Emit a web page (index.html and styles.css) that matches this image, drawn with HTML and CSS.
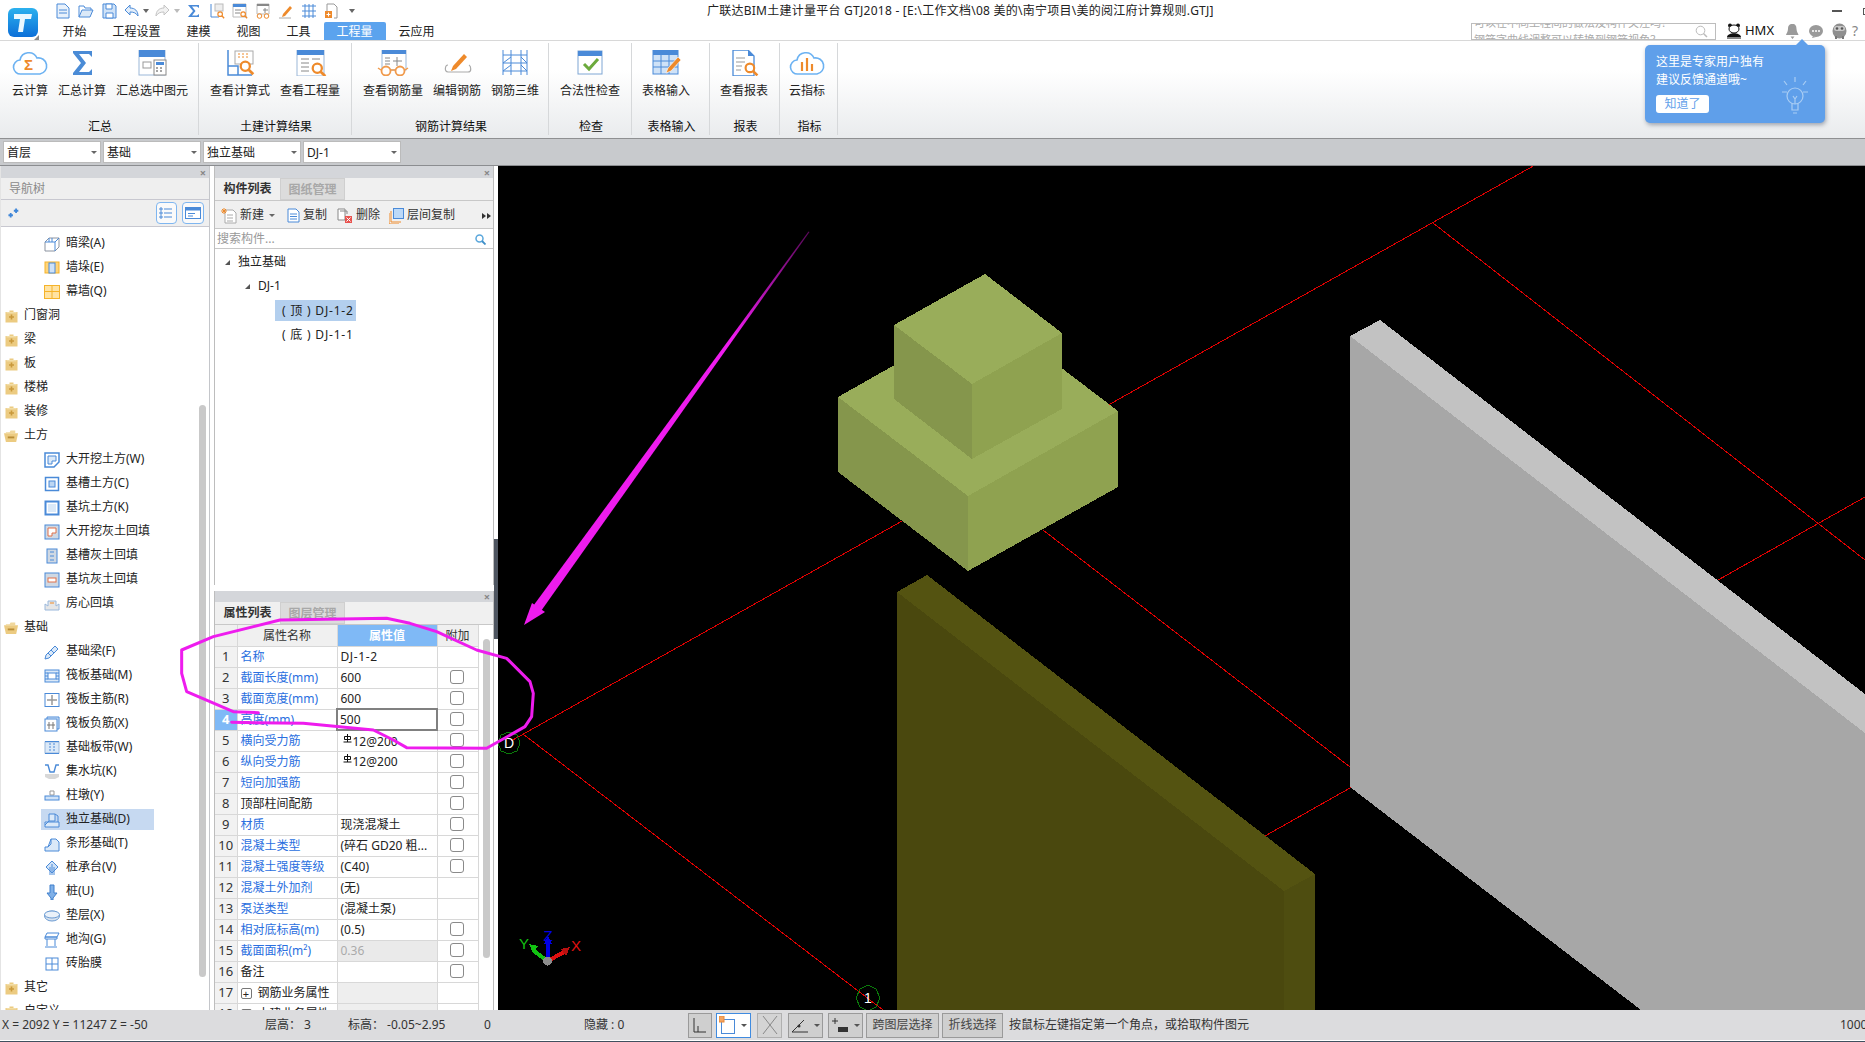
FILE: index.html
```html
<!DOCTYPE html>
<html lang="zh-CN">
<head>
<meta charset="utf-8">
<title>广联达BIM土建计量平台 GTJ2018</title>
<link rel="stylesheet" href="styles.css">
</head>
<body>
<svg class="defs" width="0" height="0" aria-hidden="true">
  <symbol id="fold" viewBox="0 0 14 14"><path d="M1 3h4V1.500h4V3h4v10.500H1z" fill="#eccb81"/><path d="M2 3.800h10" stroke="#f6e5b8"/><path d="M7 5.500v5M4.500 8h5" stroke="#c9993b" stroke-width="1.600"/></symbol>
  <symbol id="open" viewBox="0 0 16 14"><path d="M2 3h4l1-2h5v3H2z" fill="#f0d79c"/><path d="M0 4h15l-2 9.500H2z" fill="#eccb81"/><path d="M4 8.500h7" stroke="#b98d37" stroke-width="2"/></symbol>
  <symbol id="mag" viewBox="0 0 14 14"><circle cx="5.500" cy="5.500" r="4" fill="#fff" stroke="#ee8a2b" stroke-width="2"/><path d="M8.500 8.500l4 4" stroke="#ee8a2b" stroke-width="2.400"/></symbol>
</svg>

<header class="top">
  <div class="logo-box">
    <svg class="logo" width="30" height="29" viewBox="0 0 30 29"><defs><linearGradient id="lg" x1="0" y1="0" x2="0" y2="1"><stop offset="0" stop-color="#2cb1ee"/><stop offset="1" stop-color="#0c6fd8"/></linearGradient></defs><rect width="30" height="29" rx="6" fill="url(#lg)"/><path d="M6 6h18l-1 5h-6l-2 13h-5l2-13H6z" fill="#eaf8ff"/></svg>
    <svg class="logo-arrow" width="5" height="5" viewBox="0 0 5 5"><path d="M5 0v5H0z" fill="#8a8a8a"/></svg>
  </div>
  <div class="top-main">
    <div class="title-row">
      <div class="qat">
        <svg class="qi" viewBox="0 0 16 16"><path d="M2 1h8l4 4v10H2z" fill="#e8f1fb" stroke="#4a8ad8"/><path d="M4 7h8M4 10h8" stroke="#4a8ad8"/></svg>
        <svg class="qi" viewBox="0 0 16 16"><path d="M1 14V3h5l1 2h6v2" fill="none" stroke="#4a8ad8"/><path d="M1 14l3-7h11l-3 7z" fill="#dbe9f8" stroke="#4a8ad8"/></svg>
        <svg class="qi" viewBox="0 0 16 16"><path d="M2 1h11l2 2v12H2z" fill="#cfe2f7" stroke="#4a8ad8"/><path d="M5 1h6v5H5zM5 10h7v5H5z" fill="#fff" stroke="#4a8ad8"/></svg>
        <svg class="qi" viewBox="0 0 16 16"><path d="M6 2L1 7l5 5V9c4 0 6 1 8 4 0-5-3-8-8-8z" fill="#e3eefa" stroke="#4a8ad8"/></svg>
        <span class="qd"></span>
        <svg class="qi qm" viewBox="0 0 16 16"><path d="M10 2l5 5-5 5V9c-4 0-6 1-8 4 0-5 3-8 8-8z" fill="#f2f2f2" stroke="#c4c4c4"/></svg>
        <span class="qd qg"></span>
        <svg class="qi qs" viewBox="0 0 16 16"><path d="M2 2h11v3l-2-1.500H6L9.500 8 6 12.500h5l2-1.500v3H2l5-6z" fill="#4a8ad8"/></svg>
        <svg class="qi" viewBox="0 0 16 16"><path d="M2 1v13h8" fill="none" stroke="#4a8ad8"/><rect x="6" y="1" width="8" height="7" fill="#eee" stroke="#bbb"/><use href="#mag" x="8" y="8" width="8" height="8"/></svg>
        <svg class="qi" viewBox="0 0 16 16"><path d="M1 1h13v13H1z" fill="#fff" stroke="#bbb"/><path d="M1 1h13v3H1z" fill="#4a8ad8"/><path d="M3 7h6M3 10h5" stroke="#888"/><use href="#mag" x="8" y="8" width="8" height="8"/></svg>
        <svg class="qi" viewBox="0 0 16 16"><path d="M2 1h12v10H2z" fill="#fff" stroke="#bbb"/><path d="M2 1h12v2H2z" fill="#888"/><path d="M10 5v5M8 7h5" stroke="#888"/><circle cx="4.500" cy="13" r="2.300" fill="none" stroke="#ee8a2b"/><circle cx="11.500" cy="13" r="2.300" fill="none" stroke="#ee8a2b"/></svg>
        <svg class="qi" viewBox="0 0 16 16"><path d="M5 11L12 3l2 2-7 8-3 1z" fill="#ee8a2b"/><path d="M1 15h12" stroke="#aaa"/></svg>
        <svg class="qi" viewBox="0 0 16 16"><path d="M1 3h14M1 8h14M1 13h14M4 1v14M8 1v14M12 1v14" stroke="#4a8ad8" fill="none"/></svg>
        <svg class="qi" viewBox="0 0 16 16"><path d="M3 8V1h7l3 3v11h-3" fill="#fff" stroke="#999"/><rect x="1" y="8" width="7" height="7" fill="#ee8a2b"/><path d="M4.500 9.500v4M2.500 11.500h4" stroke="#fff"/></svg>
        <span class="qd qm2"></span>
      </div>
      <div class="title">广联达BIM土建计量平台 GTJ2018 - [E:\工作文档\08 美的\南宁项目\美的阅江府计算规则.GTJ]</div>
      <div class="win"><span class="win-min"></span><span class="win-max"></span></div>
    </div>
    <div class="tab-row">
      <nav class="tabs">
        <span class="tab">开始</span><span class="tab">工程设置</span><span class="tab">建模</span><span class="tab">视图</span><span class="tab">工具</span><span class="tab active">工程量</span><span class="tab">云应用</span>
      </nav>
      <div class="tools">
        <div class="search"><div class="search-text">可以在不同工程间的做法及构件关注吗？<br>钢筋字曲线调整可以转换到钢筋视角？</div>
          <svg width="13" height="13" viewBox="0 0 13 13"><circle cx="5.500" cy="5.500" r="4.300" fill="none" stroke="#bbb"/><path d="M8.500 8.500l3.500 3.500" stroke="#bbb" stroke-width="1.500"/></svg>
        </div>
        <svg class="panda" width="16" height="16" viewBox="0 0 16 16"><circle cx="4" cy="2.500" r="2" fill="#111"/><circle cx="12" cy="2.500" r="2" fill="#111"/><ellipse cx="8" cy="6" rx="5" ry="4" fill="#fff" stroke="#111"/><path d="M1 14c1-5 13-5 14 0z" fill="#111"/><path d="M1 15h14" stroke="#111"/></svg>
        <span class="user">HMX</span>
        <svg class="ti1" width="13" height="15" viewBox="0 0 13 15"><path d="M6.500 0c3 0 4 2 4 5 0 3 2 5 2 6H0c0-1 2-3 2-6 0-3 1-5 4.500-5zM4.500 12.500h4L6.500 15z" fill="#9a9a9a"/></svg>
        <svg class="ti2" width="14" height="13" viewBox="0 0 14 13"><ellipse cx="7" cy="6" rx="7" ry="6" fill="#9a9a9a"/><path d="M4 11l-1 2 4-1z" fill="#9a9a9a"/><circle cx="4" cy="6" r="1" fill="#fff"/><circle cx="7" cy="6" r="1" fill="#fff"/><circle cx="10" cy="6" r="1" fill="#fff"/></svg>
        <svg class="ti3" width="15" height="16" viewBox="0 0 15 16"><ellipse cx="7.500" cy="8" rx="7" ry="7.500" fill="#8f8f8f"/><rect x="2" y="3" width="11" height="5" rx="2.500" fill="#c8c8c8"/><circle cx="5" cy="5.500" r="1.300" fill="#555"/><circle cx="10" cy="5.500" r="1.300" fill="#555"/><path d="M4 13v3M11 13v3" stroke="#777" stroke-width="2"/></svg>
        <span class="help">?</span>
      </div>
    </div>
  </div>
</header>

<section class="ribbon">
  <div class="group">
    <div class="items g1">
      <div class="rb"><svg class="ric" viewBox="0 0 36 26"><path d="M9 24a7 7 0 0 1-1-14 9 9 0 0 1 17-2 8 8 0 0 1 3 16z" fill="#fff" stroke="#6cb2f2" stroke-width="1.600"/><text class="sig" x="12" y="20">Σ</text></svg><span>云计算</span></div>
      <div class="rb"><svg class="ric" viewBox="0 0 36 26"><path d="M9 1h19v6l-3-3H15l7 9-7 9h10l3-3v6H9v-2l8-10-8-10z" fill="#4a8bd6"/></svg><span>汇总计算</span></div>
      <div class="rb"><svg class="ric" viewBox="0 0 36 26"><rect x="5" y="0" width="26" height="25" fill="#fff" stroke="#9bb7d8"/><rect x="5" y="0" width="26" height="7" fill="#4a8ad8"/><rect x="9" y="12" width="8" height="6" fill="none" stroke="#999"/><rect x="20" y="10" width="12" height="15" fill="#fff" stroke="#888"/><rect x="22" y="12" width="8" height="3" fill="#4a8ad8"/><path d="M22 18h2m2 0h2m-6 3h2m2 0h2" stroke="#888" stroke-width="1.500"/></svg><span>汇总选中图元</span></div>
    </div>
    <div class="glabel">汇总</div>
  </div>
  <div class="group">
    <div class="items">
      <div class="rb w60"><svg class="ric" viewBox="0 0 36 26"><path d="M6 0v25h24" fill="none" stroke="#4a8ad8" stroke-width="1.500"/><path d="M6 16h10v9" fill="none" stroke="#4a8ad8" stroke-width="1.500"/><rect x="13" y="1" width="18" height="13" fill="#fff" stroke="#aaa"/><path d="M16 4h2m2 0h2m2 0h2m-10 3h2m2 0h2m2 0h2" stroke="#ee8a2b"/><use href="#mag" x="17" y="10" width="16" height="16"/></svg><span>查看计算式</span></div>
      <div class="rb w60"><svg class="ric" viewBox="0 0 36 26"><rect x="5" y="0" width="27" height="26" fill="#fff" stroke="#9bb7d8"/><rect x="5" y="0" width="27" height="5" fill="#4a8ad8"/><path d="M9 9h8m3 0h8M9 13h8M9 17h8M9 21h8" stroke="#888"/><use href="#mag" x="19" y="12" width="16" height="16"/></svg><span>查看工程量</span></div>
    </div>
    <div class="glabel">土建计算结果</div>
  </div>
  <div class="group">
    <div class="items">
      <div class="rb w60"><svg class="ric" viewBox="0 0 36 26"><rect x="7" y="0" width="24" height="20" fill="#fff" stroke="#9bb7d8"/><rect x="7" y="0" width="24" height="4" fill="#4a8ad8"/><path d="M10 8h5M10 11h5M10 14h5M22 7v9M18 11h9" stroke="#888"/><circle cx="11" cy="21" r="4.500" fill="#fff" stroke="#f09a4c" stroke-width="1.800"/><circle cx="25" cy="21" r="4.500" fill="#fff" stroke="#f09a4c" stroke-width="1.800"/><path d="M15 20h6M6 20l-3-2M30 20l3-2" stroke="#f09a4c" stroke-width="1.500"/></svg><span>查看钢筋量</span></div>
      <div class="rb"><svg class="ric" viewBox="0 0 36 26"><path d="M14 16L25 4l3 3-11 12-5 2z" fill="#ee8a2b"/><path d="M9 15c-3 0-4 7 0 7h20c4 0 3-6 1-7" fill="none" stroke="#aaa" stroke-width="1.200"/></svg><span>编辑钢筋</span></div>
      <div class="rb"><svg class="ric" viewBox="0 0 36 26"><path d="M6 0v25M30 0v25M14 0v25M24 0v25M6 5h24M6 13h24M6 21h24M6 13L14 7M24 7l6 6M6 21l8-6M24 15l6 6" stroke="#4a8ad8" fill="none"/></svg><span>钢筋三维</span></div>
    </div>
    <div class="glabel">钢筋计算结果</div>
  </div>
  <div class="group">
    <div class="items">
      <div class="rb w60"><svg class="ric" viewBox="0 0 36 26"><rect x="6" y="1" width="24" height="23" fill="#fff" stroke="#7ea6d4"/><rect x="6" y="1" width="24" height="5" fill="#4a8ad8"/><path d="M12 14l5 5 9-10" fill="none" stroke="#6caa3c" stroke-width="3"/></svg><span>合法性检查</span></div>
    </div>
    <div class="glabel">检查</div>
  </div>
  <div class="group">
    <div class="items g5">
      <div class="rb"><svg class="ric" viewBox="0 0 36 26"><rect x="5" y="0" width="25" height="24" fill="#cfe2f7" stroke="#4a8ad8"/><rect x="5" y="0" width="25" height="5" fill="#4a8ad8"/><path d="M5 11h25M5 17h25M13 5v19M21 5v19" stroke="#4a8ad8"/><path d="M20 18L30 7l3 3-10 11-5 2z" fill="#ee8a2b" stroke="#fff" stroke-width=".6"/></svg><span>表格输入</span></div>
    </div>
    <div class="glabel">表格输入</div>
  </div>
  <div class="group">
    <div class="items g5">
      <div class="rb"><svg class="ric" viewBox="0 0 36 26"><path d="M7 0h15l6 6v20H7z" fill="#fff" stroke="#4a8ad8" stroke-width="1.300"/><path d="M22 0l6 6h-6z" fill="#4a8ad8"/><path d="M10 8h9M10 12h9M10 16h6M10 20h5" stroke="#999"/><use href="#mag" x="18" y="12" width="15" height="15"/></svg><span>查看报表</span></div>
    </div>
    <div class="glabel">报表</div>
  </div>
  <div class="group">
    <div class="items g7">
      <div class="rb"><svg class="ric" viewBox="0 0 36 26"><path d="M9 24a7 7 0 0 1-1-14 9 9 0 0 1 17-2 8 8 0 0 1 3 16z" fill="#fff" stroke="#6cb2f2" stroke-width="1.600"/><path d="M13 12v9M18 8v13M23 14v7" stroke="#ee8a2b" stroke-width="2.200"/></svg><span>云指标</span></div>
    </div>
    <div class="glabel">指标</div>
  </div>
</section>

<section class="combobar">
  <div class="combo">首层</div><div class="combo">基础</div><div class="combo">独立基础</div><div class="combo">DJ-1</div>
</section>

<main class="main">
  <aside class="nav">
    <div class="strip"><span class="x">×</span></div>
    <div class="nav-title">导航树</div>
    <div class="nav-tools">
      <svg class="spark" width="14" height="12" viewBox="0 0 14 12"><path d="M3 6v5M.500 8.500h5M9 1v5M6.500 3.500h5" stroke="#3f86d8" stroke-width="2"/></svg>
      <span class="nav-btn first"><svg width="14" height="14" viewBox="0 0 14 14"><path d="M1 2h2v2H1zM1 6h2v2H1zM1 10h2v2H1zM5 3h8M5 7h8M5 11h8" fill="none" stroke="#4a8ad8"/></svg></span>
      <span class="nav-btn"><svg width="16" height="14" viewBox="0 0 16 14"><rect x=".5" y="1.500" width="15" height="11" fill="#fff" stroke="#4a8ad8"/><rect x=".5" y="1.500" width="15" height="3" fill="#4a8ad8"/><path d="M3 7.500h7M3 10h5" stroke="#4a8ad8"/></svg></span>
    </div>
    <div class="tree">
      <div class="tr c"><span class="ci"><svg class="ti" viewBox="0 0 16 16"><path d="M1 6l4-4h10v9l-4 4H1z" fill="#fff" stroke="#8b93a0"/><path d="M1 6h10v9M11 6l4-4M5 2v4M8 2v4" stroke="#4a8ad8" fill="none"/></svg>暗梁(A)</span></div>
      <div class="tr c"><span class="ci"><svg class="ti" viewBox="0 0 16 16"><rect x="1" y="2" width="14" height="11" fill="#ffd47a" stroke="#f5b32a"/><rect x="5" y="3" width="6" height="10" fill="#cfe2f7" stroke="#4a8ad8"/></svg>墙垛(E)</span></div>
      <div class="tr c"><span class="ci"><svg class="ti" viewBox="0 0 16 16"><rect x="0.500" y="1.500" width="15" height="13" fill="#ffe3a3" stroke="#f5b32a"/><path d="M0 7.500h16M8 1.500v13" stroke="#f5b32a"/></svg>幕墙(Q)</span></div>
      <div class="tr f"><svg class="fi"><use href="#fold"/></svg>门窗洞</div>
      <div class="tr f"><svg class="fi"><use href="#fold"/></svg>梁</div>
      <div class="tr f"><svg class="fi"><use href="#fold"/></svg>板</div>
      <div class="tr f"><svg class="fi"><use href="#fold"/></svg>楼梯</div>
      <div class="tr f"><svg class="fi"><use href="#fold"/></svg>装修</div>
      <div class="tr f"><svg class="fi"><use href="#open"/></svg>土方</div>
      <div class="tr c"><span class="ci"><svg class="ti" viewBox="0 0 16 16"><path d="M1 1h14v9l-5 5H1z" fill="#fff" stroke="#4a8ad8" stroke-width="1.500"/><path d="M4 4h8v5H8v3H4z" fill="#dbe9f8" stroke="#4a8ad8"/></svg>大开挖土方(W)</span></div>
      <div class="tr c"><span class="ci"><svg class="ti" viewBox="0 0 16 16"><rect x="1.500" y="1.500" width="13" height="13" fill="#fff" stroke="#4a8ad8" stroke-width="1.500"/><rect x="5" y="5" width="6" height="6" fill="#bcd6f3" stroke="#4a8ad8"/></svg>基槽土方(C)</span></div>
      <div class="tr c"><span class="ci"><svg class="ti" viewBox="0 0 16 16"><rect x="1.500" y="1.500" width="13" height="13" fill="#fff" stroke="#4a8ad8" stroke-width="2"/><rect x="4" y="4" width="8" height="8" fill="#dbe9f8"/></svg>基坑土方(K)</span></div>
      <div class="tr c"><span class="ci"><svg class="ti" viewBox="0 0 16 16"><rect x="1" y="1" width="14" height="14" fill="#cfd8e3" stroke="#4a8ad8"/><path d="M4 4h8v5H8v3H4z" fill="#fff" stroke="#e0704a"/></svg>大开挖灰土回填</span></div>
      <div class="tr c"><span class="ci"><svg class="ti" viewBox="0 0 16 16"><rect x="3" y="1" width="10" height="14" fill="#cfd8e3" stroke="#4a8ad8"/><path d="M6 4h4M6 8h4M6 12h4" stroke="#4a8ad8"/></svg>基槽灰土回填</span></div>
      <div class="tr c"><span class="ci"><svg class="ti" viewBox="0 0 16 16"><rect x="1" y="1" width="14" height="14" fill="#cfd8e3" stroke="#4a8ad8"/><rect x="4" y="6" width="8" height="4" fill="#fff" stroke="#e0704a"/></svg>基坑灰土回填</span></div>
      <div class="tr c"><span class="ci"><svg class="ti" viewBox="0 0 16 16"><path d="M1 14V8l3 2V5h8v5l3-2v6z" fill="#e6e6e6" stroke="#9ab8dc"/><path d="M6 7h4" stroke="#ee8a2b"/></svg>房心回填</span></div>
      <div class="tr f"><svg class="fi"><use href="#open"/></svg>基础</div>
      <div class="tr c"><span class="ci"><svg class="ti" viewBox="0 0 16 16"><path d="M1 15l1-4L11 2l3 3-9 9z" fill="#dbe9f8" stroke="#4a8ad8"/><path d="M4 9l3 3M7 6l3 3" stroke="#4a8ad8"/></svg>基础梁(F)</span></div>
      <div class="tr c"><span class="ci"><svg class="ti" viewBox="0 0 16 16"><rect x="1" y="2" width="14" height="12" fill="#dbe9f8" stroke="#4a8ad8"/><rect x="4" y="5" width="8" height="6" fill="#fff" stroke="#4a8ad8"/><path d="M1 5h3M1 8h3M1 11h3M12 5h3M12 8h3M12 11h3" stroke="#4a8ad8"/></svg>筏板基础(M)</span></div>
      <div class="tr c"><span class="ci"><svg class="ti" viewBox="0 0 16 16"><rect x="1" y="1.500" width="14" height="13" fill="#fff" stroke="#4a8ad8"/><path d="M8 3v10M3 8h10" stroke="#999" stroke-width="1.500"/></svg>筏板主筋(R)</span></div>
      <div class="tr c"><span class="ci"><svg class="ti" viewBox="0 0 16 16"><path d="M3 1h12v12H3z" fill="#dbe9f8" stroke="#4a8ad8"/><rect x="1" y="3" width="12" height="12" fill="#fff" stroke="#4a8ad8"/><path d="M5 6v7M9 6v7M3 9h8" stroke="#777"/></svg>筏板负筋(X)</span></div>
      <div class="tr c"><span class="ci"><svg class="ti" viewBox="0 0 16 16"><rect x="1" y="2" width="14" height="11" fill="#dbe9f8" stroke="#9ab8dc"/><path d="M1 1.500h14M1 13.500h14" stroke="#4a8ad8"/><path d="M6 3v9M10 3v9" stroke="#4a8ad8" stroke-dasharray="2 1"/></svg>基础板带(W)</span></div>
      <div class="tr c"><span class="ci"><svg class="ti" viewBox="0 0 16 16"><path d="M1 1h3l2 7h4l2-7h3" fill="none" stroke="#4a8ad8" stroke-width="1.400"/><path d="M1 10h14v3l-4 2H5l-4-2z" fill="#d8d8d8"/></svg>集水坑(K)</span></div>
      <div class="tr c"><span class="ci"><svg class="ti" viewBox="0 0 16 16"><path d="M6 3h4v4H6z" fill="#fff" stroke="#999"/><rect x="1" y="8" width="14" height="4" fill="#cfe2f7" stroke="#4a8ad8"/></svg>柱墩(Y)</span></div>
      <div class="tr c"><span class="ci sel"><svg class="ti" viewBox="0 0 16 16"><path d="M5 2h6v7H5z" fill="#dbe9f8" stroke="#4a8ad8"/><path d="M1 10h14v5H1z" fill="#dbe9f8" stroke="#4a8ad8"/><path d="M5 9L1 13M11 2l3 2v6" stroke="#4a8ad8" fill="none"/></svg>独立基础(D)</span></div>
      <div class="tr c"><span class="ci"><svg class="ti" viewBox="0 0 16 16"><path d="M1 15v-4h3l3-8h5l3 3v9z" fill="#dbe9f8" stroke="#4a8ad8"/><path d="M7 3v5l-3 3" fill="none" stroke="#4a8ad8"/></svg>条形基础(T)</span></div>
      <div class="tr c"><span class="ci"><svg class="ti" viewBox="0 0 16 16"><path d="M8 1l6 6-6 6-6-6z" fill="#cfe2f7" stroke="#4a8ad8"/><path d="M6 7v8M10 7v8M8 4v11" stroke="#4a8ad8"/></svg>桩承台(V)</span></div>
      <div class="tr c"><span class="ci"><svg class="ti" viewBox="0 0 16 16"><path d="M6 1h4v8h3l-4 5v2H7v-2L3 9h3z" fill="#7fb0e8" stroke="#3f7fcc"/></svg>桩(U)</span></div>
      <div class="tr c"><span class="ci"><svg class="ti" viewBox="0 0 16 16"><ellipse cx="8" cy="8" rx="7.500" ry="5" fill="#d7e2ef" stroke="#6b9bd2"/><ellipse cx="8" cy="6.500" rx="7.500" ry="3.500" fill="#eaf1f9" stroke="#6b9bd2"/></svg>垫层(X)</span></div>
      <div class="tr c"><span class="ci"><svg class="ti" viewBox="0 0 16 16"><path d="M1 5l2-4h12l-2 4zM1 5h12v2H1zM3 7v7M11 7v7M1 15h12" fill="#fff" stroke="#4a8ad8"/></svg>地沟(G)</span></div>
      <div class="tr c"><span class="ci"><svg class="ti" viewBox="0 0 16 16"><rect x="2" y="2" width="12" height="12" fill="#fff" stroke="#4a8ad8"/><path d="M8 2v12M2 8h12" stroke="#4a8ad8"/></svg>砖胎膜</span></div>
      <div class="tr f"><svg class="fi"><use href="#fold"/></svg>其它</div>
      <div class="tr f"><svg class="fi"><use href="#fold"/></svg>自定义</div>
      <div class="thumb"></div>
    </div>
  </aside>

  <div class="mid">
    <section class="comp">
      <div class="strip"><span class="x">×</span></div>
      <div class="ptabs"><span class="ptab on">构件列表</span><span class="ptab off">图纸管理</span></div>
      <div class="ctools">
        <svg class="ct1" width="16" height="16" viewBox="0 0 16 16"><path d="M4 2h8l3 3v10H4z" fill="#fff" stroke="#aaa"/><path d="M6 7h6M6 10h6M6 13h6" stroke="#aaa"/><path d="M3 0v6M0 3h6M1 1l4 4M5 1L1 5" stroke="#ee8a2b"/></svg>
        <span class="ctxt">新建</span><span class="caret"></span>
        <svg class="ct2" width="13" height="15" viewBox="0 0 13 15"><path d="M1 1h8l3 3v10H1z" fill="#fff" stroke="#4a8ad8"/><path d="M3 6h7M3 8.500h7M3 11h7" stroke="#4a8ad8"/></svg>
        <span class="ctxt">复制</span>
        <svg class="ct3" width="16" height="15" viewBox="0 0 16 15"><path d="M1 1h7v11H1z" fill="#fff" stroke="#888"/><path d="M3 3h7v3" fill="none" stroke="#888"/><rect x="8" y="8" width="7" height="7" fill="#e8534f"/><path d="M9.500 9.500l4 4m0-4l-4 4" stroke="#fff"/></svg>
        <span class="ctxt">删除</span>
        <svg class="ct4" width="15" height="16" viewBox="0 0 15 16"><path d="M0 5v11h10" fill="none" stroke="#ee8a2b"/><path d="M2 3v11h10" fill="none" stroke="#ee8a2b"/><rect x="4.500" y=".5" width="10" height="10" fill="#bcd9f8" stroke="#4a8ad8"/></svg>
        <span class="ctxt">层间复制</span>
        <span class="more"><i></i><i></i></span>
      </div>
      <div class="csearch"><span>搜索构件...</span><svg width="11" height="11" viewBox="0 0 11 11"><circle cx="4.500" cy="4.500" r="3.500" fill="#fff" stroke="#5aa7dc" stroke-width="1.500"/><path d="M7 7l3.500 3.500" stroke="#3f8fc8" stroke-width="1.800"/></svg></div>
      <div class="ctree">
        <div class="n l0"><i class="tri"></i>独立基础</div>
        <div class="n l1"><i class="tri"></i>DJ-1</div>
        <div class="n l2"><span class="leaf sel2">( 顶 ) DJ-1-2</span></div>
        <div class="n l2"><span class="leaf">( 底 ) DJ-1-1</span></div>
      </div>
    </section>
    <section class="props">
      <div class="strip short"><span class="x">×</span></div>
      <div class="ptabs"><span class="ptab on">属性列表</span><span class="ptab off">图层管理</span></div>
      <div class="pbody">
        <table class="ptable">
          <colgroup><col class="c1"><col class="c2"><col class="c3"><col class="c4"></colgroup>
          <thead><tr><th></th><th>属性名称</th><th class="hv">属性值</th><th>附加</th></tr></thead>
          <tbody>
            <tr><td class="no">1</td><td class="lk">名称</td><td class="wide">DJ-1-2</td><td></td></tr>
            <tr><td class="no">2</td><td class="lk">截面长度(mm)</td><td>600</td><td class="cb"><i></i></td></tr>
            <tr><td class="no">3</td><td class="lk">截面宽度(mm)</td><td>600</td><td class="cb"><i></i></td></tr>
            <tr><td class="no act">4</td><td class="lk">高度(mm)</td><td class="edit">500</td><td class="cb"><i></i></td></tr>
            <tr><td class="no">5</td><td class="lk">横向受力筋</td><td class="rebar"><svg width="9" height="9" viewBox="0 0 9 9"><path d="M1.500 2.500h6v3h-6zM4.500 0v8M.5 8h8" fill="none" stroke="#111"/></svg>12@200</td><td class="cb"><i></i></td></tr>
            <tr><td class="no">6</td><td class="lk">纵向受力筋</td><td class="rebar"><svg width="9" height="9" viewBox="0 0 9 9"><path d="M1.500 2.500h6v3h-6zM4.500 0v8M.5 8h8" fill="none" stroke="#111"/></svg>12@200</td><td class="cb"><i></i></td></tr>
            <tr><td class="no">7</td><td class="lk">短向加强筋</td><td></td><td class="cb"><i></i></td></tr>
            <tr><td class="no">8</td><td>顶部柱间配筋</td><td></td><td class="cb"><i></i></td></tr>
            <tr><td class="no">9</td><td class="lk">材质</td><td>现浇混凝土</td><td class="cb"><i></i></td></tr>
            <tr><td class="no">10</td><td class="lk">混凝土类型</td><td>(碎石 GD20 粗...</td><td class="cb"><i></i></td></tr>
            <tr><td class="no">11</td><td class="lk">混凝土强度等级</td><td>(C40)</td><td class="cb"><i></i></td></tr>
            <tr><td class="no">12</td><td class="lk">混凝土外加剂</td><td>(无)</td><td></td></tr>
            <tr><td class="no">13</td><td class="lk">泵送类型</td><td>(混凝土泵)</td><td></td></tr>
            <tr><td class="no">14</td><td class="lk">相对底标高(m)</td><td>(0.5)</td><td class="cb"><i></i></td></tr>
            <tr><td class="no">15</td><td class="lk">截面面积(m²)</td><td class="ro">0.36</td><td class="cb"><i></i></td></tr>
            <tr><td class="no">16</td><td>备注</td><td></td><td class="cb"><i></i></td></tr>
            <tr><td class="no">17</td><td><span class="plus">+</span>钢筋业务属性</td><td class="gr"></td><td></td></tr>
            <tr><td class="no">18</td><td><span class="plus">+</span>土建业务属性</td><td class="gr"></td><td></td></tr>
          </tbody>
        </table>
        <div class="ptrack"><div class="pthumb"></div></div>
      </div>
    </section>
  </div>

  <div class="splitter"><div class="splitbar"></div></div>

  <div class="canvas">
    <svg class="scene" width="1367" height="844" viewBox="498 166 1367 844" shape-rendering="crispEdges">
      <rect x="498" y="166" width="1367" height="844" fill="#000"/>
      <g stroke="#e00000" stroke-width="1" fill="none">
        <path d="M511 741L1535 165"/>
        <path d="M523 734L883 1010"/>
        <path d="M1043 530L1350 767"/>
        <path d="M1265 836L1865 497"/>
        <path d="M1433 223L1865 560"/>
      </g>
      <path d="M1350 336L1380 320L1865 694V1010H1641L1350 787z" fill="#a7a7a7"/>
      <path d="M1350 336L1380 320L1865 694V733z" fill="#c2c2c2"/>
      <path d="M897 592L1284 891V1010H897z" fill="#4a480e"/>
      <path d="M897 592L927 575L1315 874L1284 891z" fill="#545311"/>
      <path d="M1284 891L1315 874V1010H1284z" fill="#4e4d10"/>
      <path d="M838 397L968 496V571L838 472z" fill="#85964c"/>
      <path d="M968 496L1118 411V487L968 571z" fill="#8fa250"/>
      <path d="M838 397L988 312L1118 411L968 496z" fill="#99ad5a"/>
      <path d="M894 325L972 384V459L894 399z" fill="#85964c"/>
      <path d="M972 384L1062 333V409L972 459z" fill="#8fa250"/>
      <path d="M894 325L985 274L1062 333L972 384z" fill="#99ad5a"/>
      <g fill="none" stroke="#0a7a0a">
        <path d="M509 732l8 3 3 8-3 8-8 3-8-3-3-8 3-8z"/>
        <path d="M868 985l8 4 4 9-4 9-8 4-8-4-4-9 4-9z"/>
      </g>
      <text class="bub" x="509" y="748" text-anchor="middle">D</text>
      <text class="bub" x="868" y="1003" text-anchor="middle">1</text>
      <path d="M548 960V942" stroke="#0000e6" stroke-width="4"/><path d="M548 936l4 8h-8z" fill="#0000e6"/>
      <path d="M547 961L533 950" stroke="#12c212" stroke-width="4"/><path d="M529 944l9 2-5 7z" fill="#12c212"/>
      <path d="M548 961L564 952" stroke="#e01010" stroke-width="4"/><path d="M570 947l-4 9-5-7z" fill="#b81010"/>
      <circle cx="547.500" cy="961" r="4.500" fill="#8c8c8c"/>
      <text class="ax z" x="548" y="941" text-anchor="middle">Z</text>
      <text class="ax y" x="524" y="949" text-anchor="middle">Y</text>
      <text class="ax xx" x="576" y="951" text-anchor="middle">X</text>
    </svg>
  </div>
</main>

<footer class="status">
  <span class="s s1">X = 2092 Y = 11247 Z = -50</span>
  <span class="s s2">层高： 3</span>
  <span class="s s3">标高： -0.05~2.95</span>
  <span class="s s4">0</span>
  <span class="s s5">隐藏 : 0</span>
  <div class="sbtns">
    <span class="sb b1"><svg width="14" height="16" viewBox="0 0 14 16"><path d="M1 1v14h12M5 9v6" fill="none" stroke="#333"/></svg></span>
    <span class="sb b2 on"><svg width="16" height="18" viewBox="0 0 16 18"><rect x="2.500" y="3.500" width="13" height="14" fill="#fff" stroke="#4a8ad8"/><rect x="0" y="0" width="5" height="6" fill="#f4a460" stroke="#e88a3a"/></svg><i class="dn"></i></span>
    <span class="sb b3 dim"><svg width="16" height="18" viewBox="0 0 16 18"><path d="M1 0l14 18M15 0L1 18" stroke="#888"/></svg></span>
    <span class="sb b4"><svg width="16" height="16" viewBox="0 0 16 16"><path d="M0 15h16M0 15L12 3" stroke="#333"/><circle cx="7" cy="9" r="1.500" fill="#333"/></svg><i class="dn"></i></span>
    <span class="sb b5"><svg width="16" height="16" viewBox="0 0 16 16"><path d="M3 1v6M0 4h6" stroke="#333"/><rect x="6" y="10" width="10" height="5" fill="#333"/></svg><i class="dn"></i></span>
    <span class="sb b6">跨图层选择</span>
    <span class="sb b7">折线选择</span>
  </div>
  <span class="s hint">按鼠标左键指定第一个角点，或拾取构件图元</span>
  <span class="s scale">1000</span>
</footer>
<div class="edge"></div>

<div class="tip">
  <p>这里是专家用户独有</p>
  <p>建议反馈通道哦~</p>
  <span class="tip-btn">知道了</span>
  <svg class="bulb" width="30" height="40" viewBox="0 0 30 40"><g fill="none" stroke="#a9cdf4" stroke-width="1.200"><circle cx="15" cy="19" r="8"/><path d="M12 27v6h6v-6M13 36h4M13 19l2 3 2-3M15 22v5M15 0v5M2 15h5M23 15h5M4 4l3 4M26 4l-3 4"/></g></svg>
</div>

<svg class="ink" width="1865" height="1042" viewBox="0 0 1865 1042">
  <defs><linearGradient id="fade" gradientUnits="userSpaceOnUse" x1="809" y1="232" x2="730" y2="335"><stop offset="0" stop-color="#5a085a"/><stop offset="1" stop-color="#ee1cee"/></linearGradient></defs>
  <path d="M809.500 232L541 611L533.500 605.500L808.500 231.500z" fill="url(#fade)"/>
  <path d="M524 625L532 603L545 612z" fill="#ee1cee"/>
  <g transform="translate(170 590) scale(.3333)">
    <path d="M265 368L190 365L50 305L35 250L35 180L130 140L330 90L650 85L720 100L800 125L920 180L1010 205L1080 275L1090 310L1085 380L1065 410L950 475L710 473L670 450L610 420L400 400L185 397" fill="none" stroke="#ee1cee" stroke-width="9" stroke-linejoin="round" stroke-linecap="round"/>
  </g>
</svg>
</body>
</html>
```

FILE: styles.css
```css
* { box-sizing: border-box; }
html, body { margin: 0; padding: 0; }
body {
  position: relative;
  width: 1865px;
  height: 1042px;
  overflow: hidden;
  background: #fff;
  color: #222;
  font: 12px/1.2 "Noto Sans", "Noto Sans CJK SC", sans-serif;
  display: flex;
  flex-direction: column;
}
.defs { position: absolute; }

/* top bar */
.top { display: flex; height: 41px; border-bottom: 1px solid #d8d8d8; flex: none; }
.logo-box { position: relative; width: 46px; flex: none; padding: 8px 0 0 8px; }
.logo { display: block; }
.logo-arrow { position: absolute; right: 7px; bottom: 0; }
.top-main { flex: 1; display: flex; flex-direction: column; min-width: 0; }
.title-row { height: 22px; display: flex; align-items: center; }
.qat { display: flex; align-items: center; width: 312px; padding-left: 5px; flex: none; }
.qi { width: 16px; height: 16px; margin: 0 3.5px; flex: none; }
.qm { margin-left: 4.5px; }
.qs { margin-left: 6px; }
.qd { width: 6px; height: 0; border: 3px solid transparent; border-top: 4px solid #666; border-bottom: 0; flex: none; }
.qd.qg { border-top-color: #bbb; margin-left: 1px; }
.qd.qm2 { margin-left: 5px; }
.title { margin-left: 349px; white-space: nowrap; color: #222; font-size: 12px; letter-spacing: .25px; }
.win { margin-left: auto; display: flex; align-items: center; gap: 21px; }
.win-min { width: 10px; height: 2px; background: #555; }
.win-max { width: 7px; height: 7px; border: 1px solid #555; margin-right: -5px; }
.tab-row { height: 18px; display: flex; justify-content: space-between; }
.tabs { display: flex; padding-left: 3.5px; }
.tab { padding: 0 13px; height: 18px; line-height: 19px; }
.tab.active { background: #5ba3ee; color: #fff; border-radius: 2px 2px 0 0; }
.tools { display: flex; align-items: center; padding-right: 1px; }
.search { width: 245px; height: 17px; border: 1px solid #bdbdbd; display: flex; align-items: center; justify-content: space-between; padding-right: 7px; overflow: hidden; }
.search-text { color: #aaa; font-size: 11px; line-height: 17px; white-space: nowrap; margin-left: 2px; }
.panda { margin-left: 10px; flex: none; }
.user { margin-left: 3px; font-size: 13px; color: #111; }
.ti1 { margin-left: 12px; }
.ti2 { margin-left: 10px; }
.ti3 { margin-left: 9px; }
.help { margin-left: 5px; color: #888; font-size: 14px; width: 8px; margin-right: 4px; }

/* ribbon */
.ribbon {
  flex: none;
  height: 98px;
  display: grid;
  grid-template-columns: 199px 153px 197px 83px 78px 70px 58px;
  justify-content: start;
  padding-top: 2px;
  border-bottom: 1px solid #8f9092;
  background: linear-gradient(#fff 0, #fff 30%, #e9ebed 100%);
}
.group { display: flex; flex-direction: column; height: 92px; border-right: 1px solid #d6d8da; }
.items { display: flex; gap: 10px; padding-left: 11px; height: 76px; }
.items.g1 { padding-left: 12px; }
.items.g5 { padding-left: 10px; }
.items.g7 { padding-left: 9px; }
.rb { display: flex; flex-direction: column; align-items: center; }
.rb span { margin-top: 5.5px; line-height: 17px; white-space: nowrap; }
.ric { width: 36px; height: 26px; margin-top: 7px; flex: none; }
.sig { font: 700 15px "Liberation Sans", sans-serif; fill: #ee8a2b; }
.glabel { text-align: center; line-height: 17px; padding-left: 2px; color: #111; }

/* combos */
.combobar { flex: none; height: 27px; background: #c8cacd; border-bottom: 1px solid #8b8d90; display: flex; gap: 2px; padding: 2px 0 0 3px; }
.combo { position: relative; width: 98px; height: 22px; background: #fff; border: 1px solid #bbb; line-height: 21px; padding-left: 3px; }
.combo::after { content: ""; position: absolute; right: 3px; top: 9px; border: 3px solid transparent; border-top: 3px solid #666; border-bottom: 0; }

/* main */
.main { flex: none; height: 844px; display: flex; overflow: hidden; background: #fff; }
.strip { height: 12px; background: #d4d6da; display: flex; justify-content: flex-end; align-items: center; padding-right: 3px; }
.strip.short { height: 11px; }
.x { color: #888; font-size: 11px; line-height: 9px; font-weight: 700; }

.nav { width: 210px; flex: none; display: flex; flex-direction: column; border-right: 1px solid #c4c6ca; border-left: 1px solid #e4e4e4; }
.nav-title { height: 22px; background: #efefef; border-bottom: 1px solid #c8c8d0; padding-left: 8px; line-height: 21px; color: #8a8a8a; }
.nav-tools { height: 27px; background: #efefef; border-bottom: 1px solid #c8c8d0; display: flex; align-items: center; padding-left: 7px; }
.spark { margin-right: 135px; }
.nav-btn { width: 24px; height: 22px; border: 1px solid #7fb6f0; border-radius: 4px; margin-right: 5px; background: #fafafa; display: flex; align-items: center; justify-content: center; }
.tree { position: relative; flex: 1; padding-top: 4.5px; overflow: hidden; background: #fff; }
.tr { height: 24px; display: flex; align-items: center; white-space: nowrap; }
.tr.f { padding-left: 3px; gap: 5px; }
.tr.c { padding-left: 40px; }
.fi { width: 15px; height: 14px; flex: none; }
.ci { display: flex; align-items: center; gap: 6px; height: 21px; width: 113px; padding-left: 3px; }
.ci.sel { background: #c6d9f1; }
.ti { width: 16px; height: 16px; flex: none; }
.thumb { position: absolute; right: 3px; top: 178px; width: 7px; height: 572px; border-radius: 4px; background: #c9c9c9; }

.mid { width: 280px; margin-left: 4px; flex: none; display: flex; flex-direction: column; gap: 6px; }
.comp { height: 419px; display: flex; flex-direction: column; border-left: 1px solid #bdbdbd; border-right: 1px solid #bdbdbd; }
.props { flex: 1; min-height: 0; display: flex; flex-direction: column; border-left: 1px solid #bdbdbd; border-right: 1px solid #bdbdbd; }
.ptabs { height: 23px; flex: none; background: #f0f0f0; border-bottom: 1px solid #c8c8c8; display: flex; align-items: stretch; }
.ptab { width: 65px; text-align: center; line-height: 22px; }
.ptab.on { font-weight: 700; color: #333; }
.ptab.off { background: #dcdcdc; color: #a8a8a8; border: 1px solid #cfcfcf; font-weight: 700; }
.ctools { height: 28px; background: #f0f0f0; border-bottom: 1px solid #c8c8c8; display: flex; align-items: center; padding: 2px 0 0 6px; flex: none; }
.ctxt { margin-left: 3px; color: #333; white-space: nowrap; }
.caret { margin-left: 5px; border: 3px solid transparent; border-top: 3px solid #666; border-bottom: 0; }
.ct2 { margin-left: 12px; }
.ct3 { margin-left: 10px; }
.ct4 { margin-left: 9px; }
.more { margin-left: auto; margin-right: 2px; display: flex; }
.more i { width: 0; height: 0; border: 3px solid transparent; border-left: 4px solid #333; border-right: 0; margin-left: 1px; }
.csearch { height: 20px; border-bottom: 1px solid #c8c8c8; display: flex; align-items: center; justify-content: space-between; padding: 1px 7px 0 2px; color: #999; flex: none; }
.ctree { flex: 1; padding-top: 1px; }
.n { height: 24px; display: flex; align-items: center; white-space: nowrap; }
.l0 { padding-left: 10px; }
.l1 { padding-left: 30px; }
.l2 { padding-left: 60px; }
.tri { width: 0; height: 0; border-left: 5px solid transparent; border-bottom: 5px solid #555; margin-right: 8px; }
.leaf { height: 21px; width: 81px; line-height: 21px; padding-left: 7px; letter-spacing: .8px; white-space: nowrap; }
.sel2 { background: #b3cfee; }

.pbody { flex: 1; min-height: 0; display: flex; overflow: hidden; }
.ptable { width: 263px; border-collapse: collapse; table-layout: fixed; flex: none; align-self: flex-start; }
.c1 { width: 22px; } .c2 { width: 100px; } .c3 { width: 100px; } .c4 { width: 41px; }
.ptable th, .ptable td { height: 21px; padding: 1px 0 0 3px; border: 1px solid #d8d8d8; border-top: 0; border-left: 0; white-space: nowrap; overflow: hidden; font-weight: 400; }
.ptable th { background: #f0f0f0; color: #333; text-align: center; padding: 1px 0 0; }
.ptable th.hv { background: #7fb9f6; color: #fff; font-weight: 700; }
.ptable .no { background: #f2f2f2; text-align: center; padding: 1px 0 0; color: #333; font-size: 13px; }
.ptable .no.act { background: #7fb9f6; color: #fff; font-weight: 700; }
.lk { color: #2a6fe0; }
.ptable td.wide { letter-spacing: .6px; }
.ptable td.edit { border: 2px solid #808080; padding-left: 2px; }
.ptable td.ro { background: #eaeaea; color: #aaa; }
.ptable td.gr { background: #eee; }
.ptable td.cb { padding: 0 2px 2px 0; text-align: center; }
.cb i { display: inline-block; width: 14px; height: 14px; border: 1px solid #8a8a8a; border-radius: 3px; vertical-align: middle; }
.rebar svg { display: inline-block; vertical-align: 3px; margin: 0 1px 0 2px; }
.plus { display: inline-block; width: 11px; height: 11px; border: 1px solid #777; border-radius: 2px; line-height: 9px; text-align: center; margin: 0 6px 0 0; vertical-align: -1px; font-size: 11px; }
.ptrack { flex: 1; padding: 14px 0 0 4px; }
.pthumb { width: 7px; height: 319px; border-radius: 4px; background: #c9c9c9; }

.splitter { width: 4px; flex: none; }
.splitbar { margin-top: 373px; height: 100px; background: #4e5560; }
.canvas { flex: 1; min-width: 0; background: #000; }
.scene { display: block; }
.bub { font: 14px "Liberation Sans", sans-serif; fill: #fff; }
.ax { font: 15px "Liberation Sans", sans-serif; }
.ax.z { fill: #0000e6; } .ax.y { fill: #12c212; } .ax.xx { fill: #e01010; }

/* status */
.status { flex: none; height: 30px; padding-top: 1px; background: #dcdcde; display: flex; align-items: center; color: #333; white-space: nowrap; overflow: hidden; }
.s { flex: none; }
.s1 { width: 265px; padding-left: 2px; }
.s2 { width: 83px; }
.s3 { width: 136px; }
.s4 { width: 100px; }
.s5 { width: 104px; }
.sbtns { display: flex; gap: 3px; flex: none; margin-top: -1px; }
.sb { height: 25px; background: #cfcfcf; border: 1px solid #9a9a9a; display: flex; align-items: center; justify-content: center; gap: 6px; color: #444; }
.sb.on { background: #fff; border-color: #3f8be0; }
.sb.dim { background: #d4d4d4; border-color: #b0b0b0; }
.b1 { width: 24px; }
.b2 { width: 35px; margin-left: .7px; }
.b3 { width: 25px; margin-left: 3.4px; }
.b4 { width: 35px; margin-left: 3px; }
.b5 { width: 35px; margin-left: 2px; }
.b6 { width: 73px; }
.b7 { width: 61px; }
.dn { border: 3px solid transparent; border-top: 3px solid #555; border-bottom: 0; }
.hint { margin-left: 6px; }
.scale { margin-left: auto; width: 25px; overflow: hidden; }
.edge { flex: none; height: 2px; background: #fff; border-bottom: 1px solid #40505f; }

/* overlays */
.tip { position: absolute; left: 1645px; top: 45px; width: 180px; height: 78px; background: #5f9fea; border-radius: 5px; box-shadow: 1px 2px 4px rgba(80, 90, 110, .5); color: #fff; padding: 8px 11px; }
.tip::before { content: ""; position: absolute; left: 151px; top: -6px; border: 6px solid transparent; border-bottom: 6px solid #5f9fea; border-top: 0; }
.tip p { margin: 0; height: 18px; line-height: 18px; }
.tip-btn { display: block; width: 53px; height: 18px; margin-top: 6px; background: #fff; border-radius: 3px; color: #5f9fea; text-align: center; line-height: 18px; }
.bulb { position: absolute; left: 135px; top: 32px; }
.ink { position: absolute; left: 0; top: 0; pointer-events: none; }
```
